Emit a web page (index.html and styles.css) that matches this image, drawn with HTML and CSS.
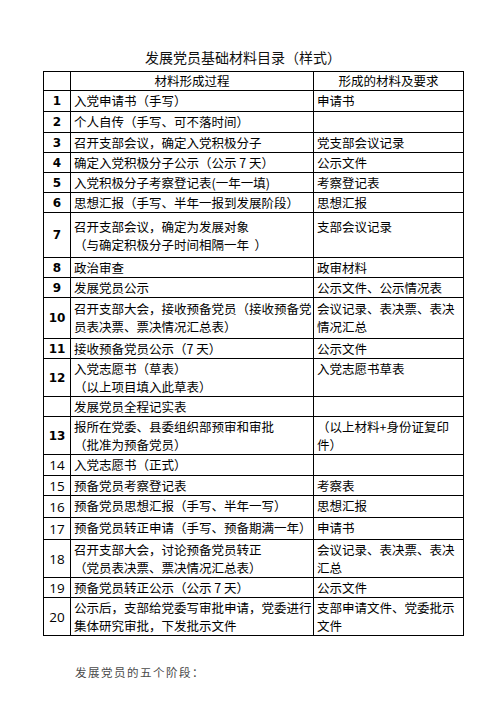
FILE: index.html
```html
<!DOCTYPE html>
<html lang="zh-CN">
<head>
<meta charset="utf-8">
<title>发展党员基础材料目录（样式）</title>
<link rel="stylesheet" href="styles.css">
</head>
<body>
<main class="page">
  <h1 class="title">发展党员基础材料目录（样式）</h1>
  <table class="list">
    <colgroup>
      <col class="c-no">
      <col class="c-step">
      <col class="c-doc">
    </colgroup>
    <thead>
      <tr class="h19">
        <th class="no"></th>
        <th class="head">材料形成过程</th>
        <th class="head">形成的材料及要求</th>
      </tr>
    </thead>
    <tbody>
      <tr class="h21"><td class="no b">1</td><td class="t">入党申请书（手写）</td><td class="t">申请书</td></tr>
      <tr class="h21"><td class="no b">2</td><td class="t">个人自传（手写、可不落时间）</td><td class="t"></td></tr>
      <tr class="h20"><td class="no b">3</td><td class="t">召开支部会议，确定入党积极分子</td><td class="t">党支部会议记录</td></tr>
      <tr class="h20"><td class="no b">4</td><td class="t">确定入党积极分子公示（公示 7 天）</td><td class="t">公示文件</td></tr>
      <tr class="h19"><td class="no b">5</td><td class="t">入党积极分子考察登记表(一年一填)</td><td class="t">考察登记表</td></tr>
      <tr class="h20"><td class="no b">6</td><td class="t">思想汇报（手写、半年一报到发展阶段）</td><td class="t">思想汇报</td></tr>
      <tr class="h45 pad5"><td class="no b">7</td><td class="t">召开支部会议，确定为发展对象<br>（与确定积极分子时间相隔一年&nbsp;&nbsp;）</td><td class="t">支部会议记录</td></tr>
      <tr class="h20"><td class="no b">8</td><td class="t">政治审查</td><td class="t">政审材料</td></tr>
      <tr class="h20"><td class="no b">9</td><td class="t">发展党员公示</td><td class="t">公示文件、公示情况表</td></tr>
      <tr class="h41 pad2"><td class="no b">10</td><td class="t">召开支部大会，接收预备党员（接收预备党<br>员表决票、票决情况汇总表）</td><td class="t">会议记录、表决票、表决<br>情况汇总</td></tr>
      <tr class="h20"><td class="no b">11</td><td class="t">接收预备党员公示（7 天）</td><td class="t">公示文件</td></tr>
      <tr class="h38"><td class="no b">12</td><td class="t">入党志愿书（草表）<br>（以上项目填入此草表）</td><td class="t">入党志愿书草表</td></tr>
      <tr class="h20"><td class="no"></td><td class="t">发展党员全程记实表</td><td class="t"></td></tr>
      <tr class="h37"><td class="no b">13</td><td class="t">报所在党委、县委组织部预审和审批<br>（批准为预备党员）</td><td class="t">（以上材料+身份证复印<br>件）</td></tr>
      <tr class="h21"><td class="no">14</td><td class="t">入党志愿书（正式）</td><td class="t"></td></tr>
      <tr class="h20"><td class="no">15</td><td class="t">预备党员考察登记表</td><td class="t">考察表</td></tr>
      <tr class="h22"><td class="no">16</td><td class="t">预备党员思想汇报（手写、半年一写）</td><td class="t">思想汇报</td></tr>
      <tr class="h22"><td class="no">17</td><td class="t">预备党员转正申请（手写、预备期满一年）</td><td class="t">申请书</td></tr>
      <tr class="h38"><td class="no">18</td><td class="t">召开支部大会，讨论预备党员转正<br>（党员表决票、票决情况汇总表）</td><td class="t">会议记录、表决票、表决<br>汇总</td></tr>
      <tr class="h20"><td class="no">19</td><td class="t">预备党员转正公示（公示 7 天）</td><td class="t">公示文件</td></tr>
      <tr class="h38"><td class="no">20</td><td class="t">公示后，支部给党委写审批申请，党委进行<br>集体研究审批，下发批示文件</td><td class="t">支部申请文件、党委批示<br>文件</td></tr>
    </tbody>
  </table>
  <p class="stage">发展党员的五个阶段：</p>
</main>
</body>
</html>
```

FILE: styles.css
```css
html, body {
  margin: 0;
  background: #ffffff;
}

.page {
  padding: 48px 0 0 43px;
  font-family: "Noto Sans CJK SC", "Noto Sans", sans-serif;
  color: #000000;
}

.title {
  margin: 0 0 5px 102px;
  font-size: 14px;
  line-height: 18px;
  font-weight: normal;
  color: #111111;
}

.list {
  border-collapse: collapse;
  table-layout: fixed;
  width: 420px;
  font-size: 12.5px;
  line-height: 18px;
}

.c-no { width: 27px; }
.c-step { width: 243px; }
.c-doc { width: 150px; }

.list th,
.list td {
  border: 1px solid #000;
  padding: 0 0 0 3px;
  white-space: nowrap;
  overflow: hidden;
}

.list th {
  font-weight: normal;
}

.list .head {
  text-align: center;
  padding: 0;
}

.list .t {
  vertical-align: top;
  text-align: left;
  padding-top: 1px;
}

.list .no {
  padding: 0;
  text-align: center;
  vertical-align: middle;
  font-family: "Open Sans", "DejaVu Sans", sans-serif;
  font-size: 13.5px;
}

.list .no.b {
  font-family: "DejaVu Sans", sans-serif;
  font-weight: bold;
  font-size: 12px;
}

.list tr.pad5 .t { padding-top: 5px; }
.list tr.pad2 .t { padding-top: 2px; }

.h19 { height: 19px; }
.h20 { height: 20px; }
.h21 { height: 21px; }
.h22 { height: 22px; }
.h37 { height: 37px; }
.h38 { height: 38px; }
.h41 { height: 41px; }
.h45 { height: 45px; }

.stage {
  margin: 27px 0 0 32px;
  font-size: 11.5px;
  line-height: 19px;
  letter-spacing: 1.5px;
  color: #4a4a4a;
}
```
